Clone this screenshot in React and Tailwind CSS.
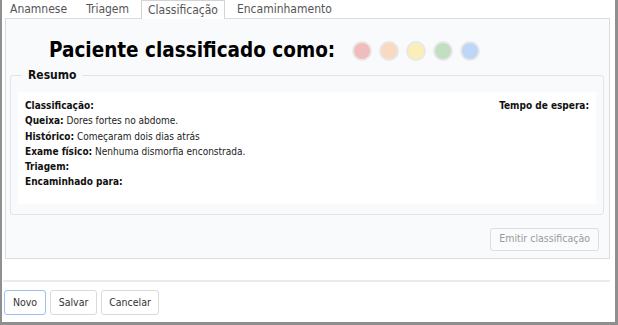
import { useState } from "react";

const tabs = ["Anamnese", "Triagem", "Classificação", "Encaminhamento"];

const levels = ["bg-[#f0bcbc]", "bg-[#f9d9bf]", "bg-[#fbeeb8]", "bg-[#c2dfc2]", "bg-[#bfd6f7]"];

const resumo = [
  ["Classificação:", ""],
  ["Queixa:", "Dores fortes no abdome."],
  ["Histórico:", "Começaram dois dias atrás"],
  ["Exame físico:", "Nenhuma dismorfia enconstrada."],
  ["Triagem:", ""],
  ["Encaminhado para:", ""],
];

export default function App() {
  const [active, setActive] = useState(2);

  return (
    <div className="h-[325px] w-[618px] overflow-hidden border-b-[3px] border-l-2 border-r-[3px] border-[#8f8f8f] bg-white font-['DejaVu_Sans_Condensed','DejaVu_Sans',sans-serif] [font-stretch:condensed]">
      {/* tabs */}
      <div className="flex h-[18px] items-end gap-[5px] pl-[1px]">
        {tabs.map((tab, i) => (
          <button
            key={tab}
            onClick={() => setActive(i)}
            className={
              i === active
                ? "relative z-10 -mb-px flex h-[19px] items-center border border-b-0 border-[#d3d3d3] bg-white px-[6px] text-[12px] text-[#555]"
                : "flex h-[18px] items-center px-[7px] text-[12px] text-[#555]"
            }
          >
            {tab}
          </button>
        ))}
      </div>

      {/* panel */}
      <div className="ml-[3px] mr-[5px] h-[241px] border border-[#dcdcdc] bg-[#f9fafc]">
        <div className="flex h-[43px] items-end pl-[43px]">
          <h1 className="text-[20.5px] leading-[24px] font-bold text-black">Paciente classificado como:</h1>
          <div className="mb-[1px] ml-[17px] flex gap-[7px]">
            {levels.map((c) => (
              <span key={c} className={`h-[20px] w-[20px] rounded-full border-2 border-[#e8e8e8] ${c}`} />
            ))}
          </div>
        </div>

        <fieldset className="ml-[4px] mr-[5px] mt-[6px] rounded-[3px] border border-[#e2e4e8] px-[7px] pb-[10px]">
          <legend className="ml-[4px] px-[6px] text-[12px] leading-[15px] font-bold text-[#111]">Resumo</legend>
          <div className="mt-[9px] flex justify-between bg-white px-[7px] pb-[14px] pt-[6px] text-[10px] leading-[15.3px] text-[#222]">
            <div>
              {resumo.map(([label, value]) => (
                <p key={label}>
                  <b className="text-[#111]">{label}</b> {value}
                </p>
              ))}
            </div>
            <p className="font-bold text-[#111]">Tempo de espera:</p>
          </div>
        </fieldset>

        <div className="mr-[10px] mt-[13px] flex justify-end">
          <button disabled className="h-[23px] rounded-[3px] border border-[#dedede] bg-[#fafbfc] px-[8px] text-[10.5px] text-[#9a9a9a]">
            Emitir classificação
          </button>
        </div>
      </div>

      <div className="ml-px mr-[5px] mt-[21px] h-[2px] bg-[#ebebeb]" />

      <div className="ml-[2px] mt-[8px] flex gap-[4px]">
        <button className="h-[25px] w-[42px] rounded-[3px] border border-[#9fc0ef] bg-white text-[10.5px] text-[#333]">Novo</button>
        <button className="h-[25px] w-[47px] rounded-[3px] border border-[#dadada] bg-white text-[10.5px] text-[#333]">Salvar</button>
        <button className="h-[25px] w-[58px] rounded-[3px] border border-[#dadada] bg-white text-[10.5px] text-[#333]">Cancelar</button>
      </div>
    </div>
  );
}
